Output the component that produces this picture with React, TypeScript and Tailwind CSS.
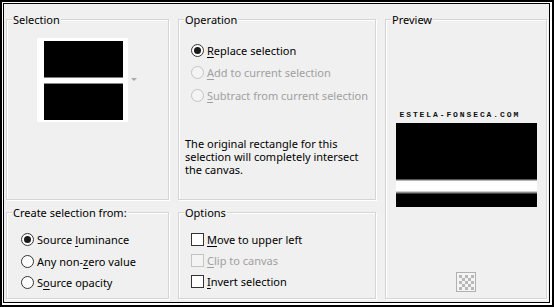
import React from 'react'

const Radio = ({ checked, disabled }: { checked?: boolean; disabled?: boolean }) => (
  <span
    className={`flex h-[13px] w-[13px] shrink-0 items-center justify-center rounded-full border ${
      disabled ? 'border-[#c4c4c4] bg-[#f4f4f4]' : 'border-[#333333] bg-white'
    }`}
  >
    {checked && <span className="h-[7px] w-[7px] rounded-full bg-[#1a1a1a]" />}
  </span>
)

const Check = ({ disabled }: { disabled?: boolean }) => (
  <span
    className={`block h-[13px] w-[13px] shrink-0 border ${
      disabled ? 'border-[#c4c4c4] bg-[#f4f4f4]' : 'border-[#333333] bg-white'
    }`}
  />
)

const Group = ({
  title,
  className,
  children,
}: {
  title: string
  className: string
  children: React.ReactNode
}) => (
  <div
    className={`relative border border-[#d5d5d5] shadow-[inset_1px_1px_0_#ffffff,1px_1px_0_#ffffff] ${className}`}
  >
    <span className="absolute -top-[8px] left-[5px] bg-[#f0f0f0] px-[1px] leading-[15px] text-black">
      {title}
    </span>
    {children}
  </div>
)

const Option = ({
  control,
  disabled,
  children,
  rowClass,
}: {
  control: React.ReactNode
  disabled?: boolean
  children: React.ReactNode
  rowClass: string
}) => (
  <div className={`flex items-center gap-[3px] ${rowClass} ${disabled ? 'text-[#a0a0a0]' : 'text-black'}`}>
    {control}
    <span className="leading-[15px]">{children}</span>
  </div>
)

const u = 'underline underline-offset-[2px] decoration-[1px]'

export default function App() {
  return (
    <div
      className="h-[307px] w-[554px] border-2 border-black bg-white"
      style={{ fontFamily: '"Noto Sans", "Open Sans", sans-serif' }}
    >
      <div className="h-full w-full border-t border-l border-r-2 border-b-2 border-white">
        <div className="h-full w-full border border-black bg-[#f0f0f0] text-[11px]">
          <div className="flex gap-[9px] pl-[2px] pt-[15px]">
            {/* left column */}
            <div className="flex w-[163px] flex-col gap-[12px]">
              <Group title="Selection" className="h-[181px] pl-[30px] pt-[18px]">
                <div className="flex items-center gap-[3px]">
                  <div className="flex h-[84px] w-[91px] flex-col bg-white pb-[2px] pl-[7px] pr-[5px] pt-[3px]">
                    <div className="h-[36px] bg-black" />
                    <div className="h-[1px] bg-[#7a7a7a]" />
                    <div className="h-[5px] bg-white" />
                    <div className="h-[1px] bg-[#8a8a8a]" />
                    <div className="flex-1 bg-black" />
                  </div>
                  <svg width="6" height="4" viewBox="0 0 6 4">
                    <path d="M0 0 L6 0 L3 3 Z" fill="#a8a8a8" />
                  </svg>
                </div>
              </Group>
              <Group title="Create selection from:" className="h-[87px] pl-[14px] pt-[16px]">
                <Option control={<Radio checked />} rowClass="h-[21.5px]">
                  Source <span className={u}>l</span>uminance
                </Option>
                <Option control={<Radio />} rowClass="h-[21.5px]">
                  Any non-<span className={u}>z</span>ero value
                </Option>
                <Option control={<Radio />} rowClass="h-[21.5px]">
                  S<span className={u}>o</span>urce opacity
                </Option>
              </Group>
            </div>

            {/* middle column */}
            <div className="flex w-[198px] flex-col gap-[12px]">
              <Group title="Operation" className="h-[181px] pl-[6px] pt-[19px]">
                <div className="pl-[6px]">
                  <Option control={<Radio checked />} rowClass="h-[22.5px]">
                    <span className={u}>R</span>eplace selection
                  </Option>
                  <Option control={<Radio disabled />} disabled rowClass="h-[22.5px]">
                    <span className={u}>A</span>dd to current selection
                  </Option>
                  <Option control={<Radio disabled />} disabled rowClass="h-[22.5px]">
                    <span className={u}>S</span>ubtract from current selection
                  </Option>
                </div>
                <p className="mt-[30px] leading-[13px] text-black">
                  The original rectangle for this
                  <br />
                  selection will completely intersect
                  <br />
                  the canvas.
                </p>
              </Group>
              <Group title="Options" className="h-[87px] pl-[12px] pt-[16px]">
                <Option control={<Check />} rowClass="h-[21px]">
                  <span className={u}>M</span>ove to upper left
                </Option>
                <Option control={<Check disabled />} disabled rowClass="h-[21px]">
                  <span className={u}>C</span>lip to canvas
                </Option>
                <Option control={<Check />} rowClass="h-[21px]">
                  <span className={u}>I</span>nvert selection
                </Option>
              </Group>
            </div>

            {/* right column */}
            <Group title="Preview" className="flex h-[280px] w-[162px] flex-col items-center pt-[90px]">
              <div className="w-[141px]">
                <div
                  className="pl-[4px] text-[8px] font-bold leading-[10px] tracking-[1.9px] text-[#111]"
                  style={{ fontFamily: '"Liberation Mono", "DejaVu Sans Mono", monospace' }}
                >
                  ESTELA-FONSECA.COM
                </div>
                <div className="mt-[3px] flex h-[84px] flex-col bg-black">
                  <div className="h-[56px] bg-black" />
                  <div className="h-[1px] bg-[#555555]" />
                  <div className="h-[1px] bg-[#b5b5b5]" />
                  <div className="h-[10px] bg-white" />
                  <div className="h-[1px] bg-[#cfcfcf]" />
                  <div className="h-[1px] bg-[#8a8a8a]" />
                  <div className="h-[1px] bg-[#404040]" />
                  <div className="flex-1 bg-black" />
                </div>
              </div>
              <div className="mt-[65px]">
                <svg width="20" height="20" viewBox="0 0 20 20">
                  <rect x="0.5" y="0.5" width="19" height="19" fill="#f4f4f4" stroke="#b0b0b0" />
                  {[0, 1, 2, 3, 4].map((r) =>
                    [0, 1, 2, 3, 4].map((c) =>
                      (r + c) % 2 === 0 ? (
                        <rect key={`${r}-${c}`} x={3 + c * 3} y={3 + r * 3} width="3" height="3" fill="#b8b8b8" />
                      ) : null
                    )
                  )}
                </svg>
              </div>
            </Group>
          </div>
        </div>
      </div>
    </div>
  )
}
